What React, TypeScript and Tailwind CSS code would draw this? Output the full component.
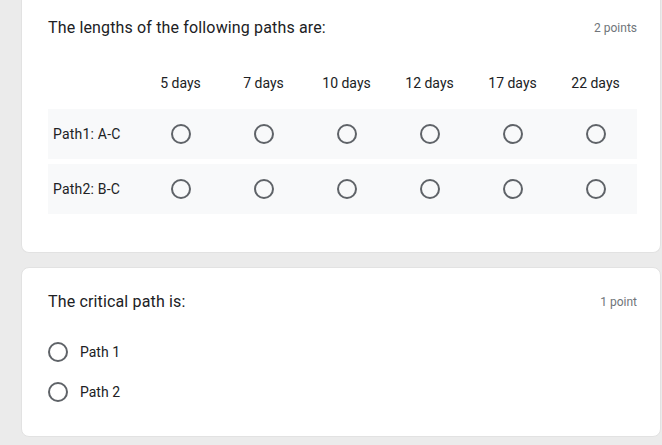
const days = ['5 days', '7 days', '10 days', '12 days', '17 days', '22 days']
const paths = ['Path1: A-C', 'Path2: B-C']

const Radio = () => (
    <div className={'w-5 h-5 rounded-full border-2 border-[#5f6368]'}/>
)

const App = () => {
    return (
        <div
            className={'w-full h-[445px] overflow-hidden bg-[#ebebeb] pl-[21px] pr-[1px] text-[#202124]'}
            style={{fontFamily: 'Roboto, "Liberation Sans", sans-serif'}}>
            <div className={'bg-white rounded-b-lg border-x border-b border-[#e2e2e2] pl-[26px] pr-[23px] pt-4 pb-[38px]'}>
                <div className={'flex items-center justify-between h-6'}>
                    <span className={'text-[16px] tracking-[0.15px]'}>The lengths of the following paths are:</span>
                    <span className={'text-[12px] text-[#70757a]'}>2 points</span>
                </div>

                <div className={'mt-5 h-[46px] grid grid-cols-[91px_repeat(6,1fr)] items-center'}>
                    <div/>
                    {days.map(d => (
                        <div key={d} className={'text-center text-[14px]'}>{d}</div>
                    ))}
                </div>

                <div className={'mt-[3px] flex flex-col gap-[5px]'}>
                    {paths.map(p => (
                        <div key={p}
                             className={'h-[50px] bg-[#f8f9fa] grid grid-cols-[91px_repeat(6,1fr)] items-center'}>
                            <div className={'pl-[5px] text-[14px] tracking-[0.2px]'}>{p}</div>
                            {days.map(d => (
                                <div key={d} className={'flex justify-center'}>
                                    <Radio/>
                                </div>
                            ))}
                        </div>
                    ))}
                </div>
            </div>

            <div className={'mt-[14px] bg-white rounded-lg border border-[#e2e2e2] pl-[26px] pr-[23px] pt-[22px] pb-[24px]'}>
                <div className={'flex items-center justify-between h-6'}>
                    <span className={'text-[16px] tracking-[0.15px]'}>The critical path is:</span>
                    <span className={'text-[12px] text-[#70757a]'}>1 point</span>
                </div>

                <div className={'mt-[18px] flex flex-col'}>
                    {['Path 1', 'Path 2'].map(o => (
                        <div key={o} className={'h-10 flex items-center gap-3'}>
                            <Radio/>
                            <span className={'text-[14px]'}>{o}</span>
                        </div>
                    ))}
                </div>
            </div>
        </div>
    );
};

export default App;
